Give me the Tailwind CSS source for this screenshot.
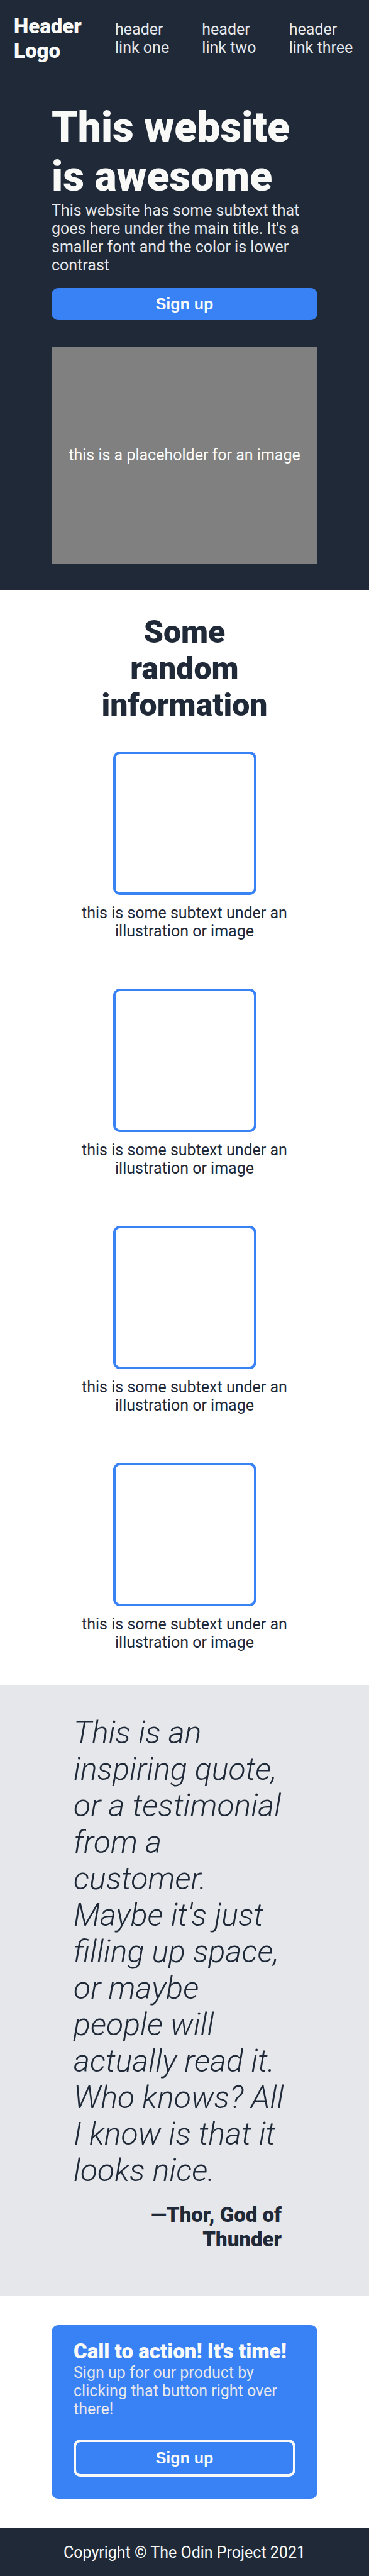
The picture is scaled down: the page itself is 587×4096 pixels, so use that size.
<!DOCTYPE html>
<html lang="en">
<head>
<meta charset="utf-8">
<meta name="viewport" content="width=device-width, initial-scale=1">
<title>Landing Page</title>
<script src="https://cdn.jsdelivr.net/npm/@tailwindcss/browser@4"></script>
</head>
<body class="bg-white font-['Roboto',sans-serif] text-[25px] leading-[29px] text-[#1f2937]">
  <header class="flex items-center bg-[#1f2937] p-[22px]">
    <div class="flex-1 text-[33px] leading-[39px] font-black text-[#f9faf8]">Header<br>Logo</div>
    <nav class="grid w-[382px] grid-cols-3 gap-[33px] text-[#e5e7eb]">
      <a href="#">header link one</a>
      <a href="#">header link two</a>
      <a href="#">header link three</a>
    </nav>
  </header>

  <main>
    <section class="bg-[#1f2937] px-[82px] py-[42px]">
      <h1 class="text-[66px] leading-[78px] font-black text-[#f9faf8]">This website is awesome</h1>
      <p class="text-[#e5e7eb]">This website has some subtext that goes here under the main title. It's a smaller font and the color is lower contrast</p>
      <button type="button" class="mt-[22px] h-[51px] w-full rounded-[11px] bg-[#3882f6] font-['Liberation_Sans',sans-serif] font-bold text-[#f9faf8]">Sign up</button>
      <div class="mt-[42px] flex h-[345px] items-center justify-center bg-[gray] text-[#f9faf8]">this is a placeholder for an image</div>
    </section>

    <section class="px-[82px] pt-[38px] pb-[54px] text-center">
      <h2 class="mx-auto max-w-[290px] text-[50px] leading-[58px] font-black">Some random information</h2>
      <div class="mt-[45px] flex flex-col gap-[77px]">
        <figure>
          <div class="mx-auto size-[228px] rounded-[11px] border-4 border-[#3882f6]"></div>
          <figcaption class="mt-[14px]">this is some subtext under an illustration or image</figcaption>
        </figure>
        <figure>
          <div class="mx-auto size-[228px] rounded-[11px] border-4 border-[#3882f6]"></div>
          <figcaption class="mt-[14px]">this is some subtext under an illustration or image</figcaption>
        </figure>
        <figure>
          <div class="mx-auto size-[228px] rounded-[11px] border-4 border-[#3882f6]"></div>
          <figcaption class="mt-[14px]">this is some subtext under an illustration or image</figcaption>
        </figure>
        <figure>
          <div class="mx-auto size-[228px] rounded-[11px] border-4 border-[#3882f6]"></div>
          <figcaption class="mt-[14px]">this is some subtext under an illustration or image</figcaption>
        </figure>
      </div>
    </section>

    <section class="bg-[#e5e7eb] pt-[46px] pr-[128px] pb-[70px] pl-[117px]">
      <blockquote class="text-[50px] leading-[58px] font-light italic">This is an inspiring quote, or a testimonial from a customer. Maybe it's just filling up space, or maybe people will actually read it. Who knows? All I know is that it looks nice.</blockquote>
      <p class="mt-[22px] pr-[11px] text-right text-[33px] leading-[39px] font-black">—Thor, God of Thunder</p>
    </section>

    <section class="px-[82px] py-[47px]">
      <div class="rounded-[11px] bg-[#3882f6] px-[35px] pt-[22px] pb-[35px]">
        <h2 class="text-[33px] leading-[39px] font-black text-[#f9faf8]">Call to action! It's time!</h2>
        <p class="text-[#e5e7eb]">Sign up for our product by clicking that button right over there!</p>
        <button type="button" class="mt-[34px] h-[59px] w-full rounded-[11px] border-4 border-[#f9faf8] font-['Liberation_Sans',sans-serif] font-bold text-[#f9faf8]">Sign up</button>
      </div>
    </section>
  </main>

  <footer class="flex h-[76px] items-center justify-center bg-[#1f2937] text-[#f9faf8]">Copyright © The Odin Project 2021</footer>
</body>
</html>
